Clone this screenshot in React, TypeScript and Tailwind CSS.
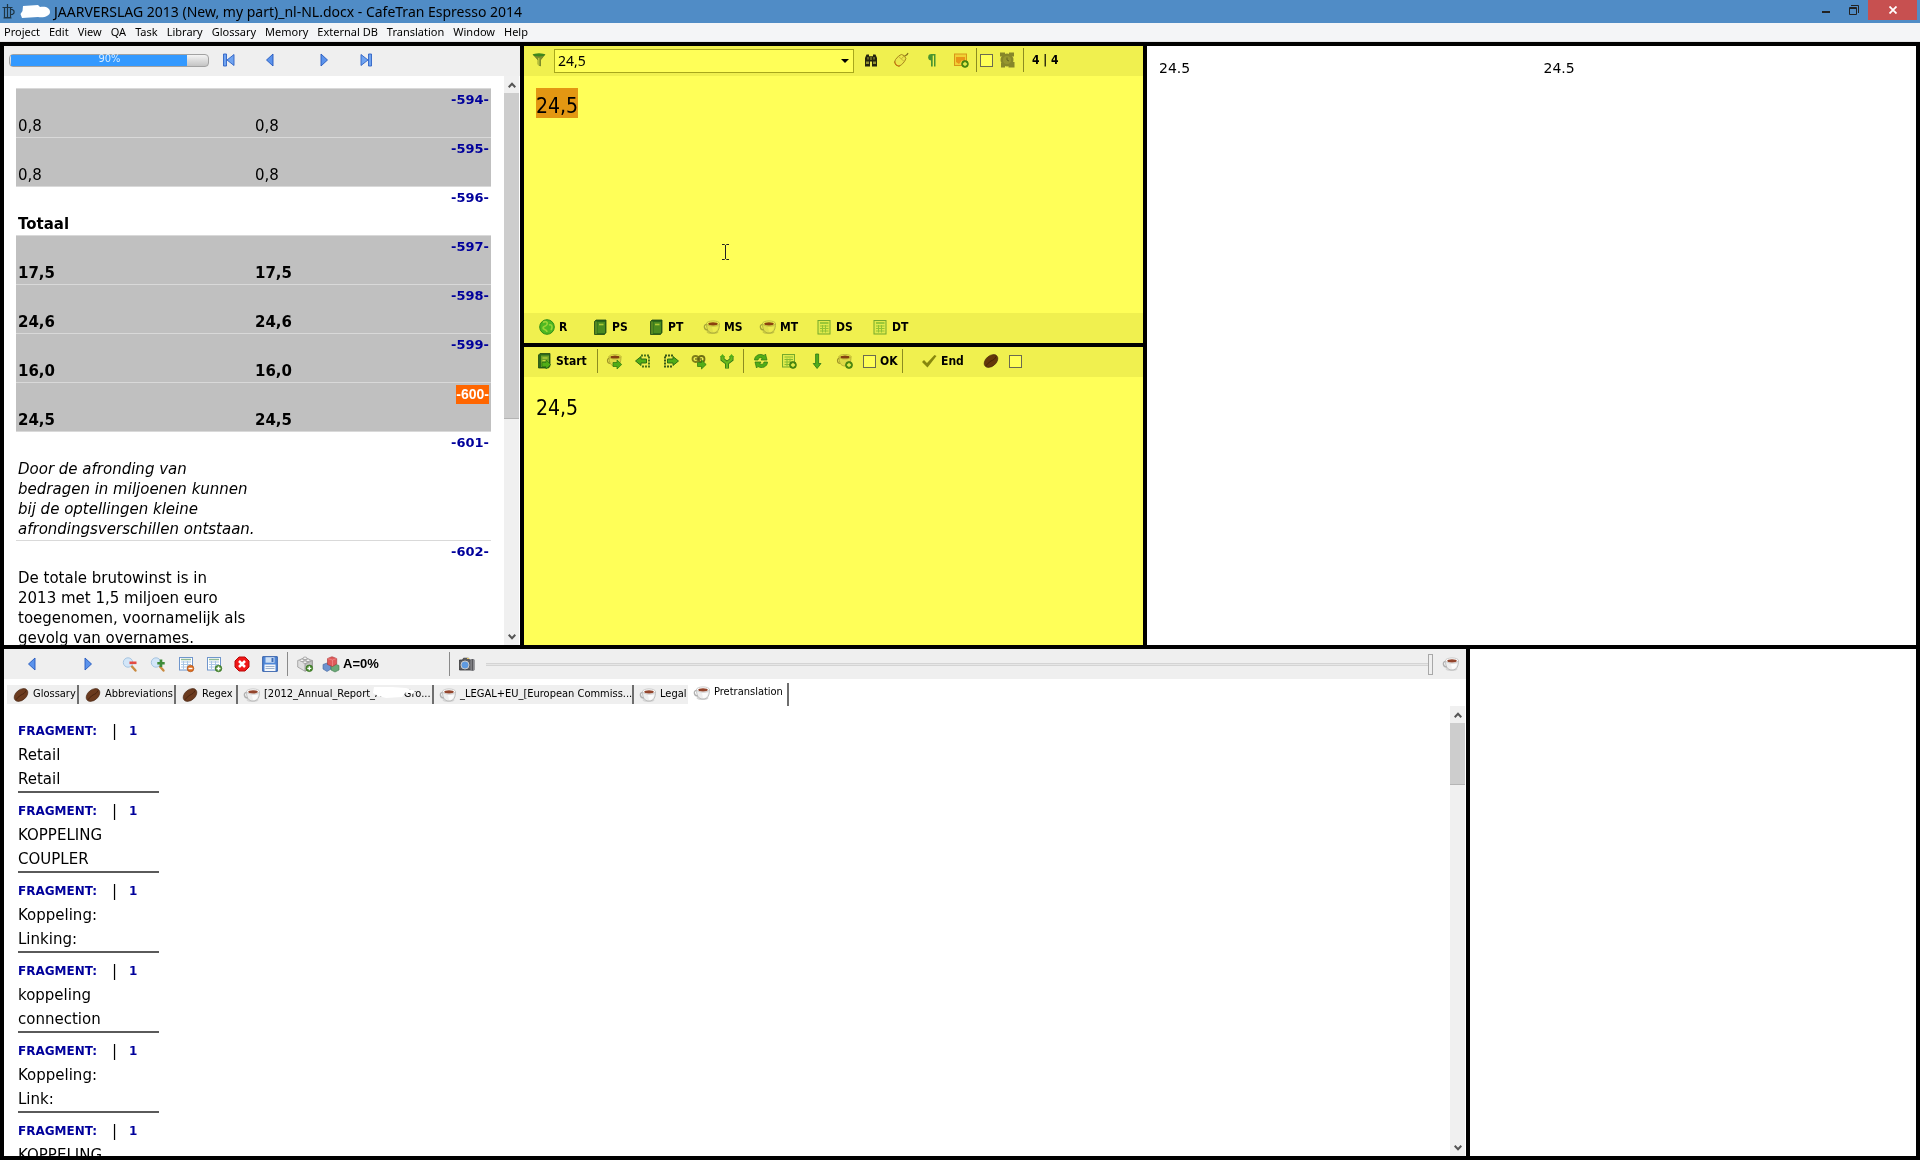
import React from 'react';

type IconName = keyof typeof drawings;

// colour drawings on a 16x16 grid
const drawings = {
  first: (
    <g stroke="#2f62c4" strokeWidth=".9" fill="#6fa3f0">
      <path d="M2.5 2h3v12h-3zM13 2.5v11L6 8z" />
    </g>
  ),
  prev: <path d="M11 2v12L4.5 8z" fill="#5b93ec" stroke="#2458bd" strokeWidth=".9" />,
  next: <path d="M5 2v12l6.5-6z" fill="#5b93ec" stroke="#2458bd" strokeWidth=".9" />,
  last: (
    <g stroke="#2f62c4" strokeWidth=".9" fill="#6fa3f0">
      <path d="M10.5 2h3v12h-3zM3 2.5v11L10 8z" />
    </g>
  ),
  filter: (
    <g>
      <path d="M2 2.5h12L9.5 8v6L7 12.5V8z" fill="#87988a" stroke="#5e7060" strokeWidth=".6" />
      <ellipse cx="8" cy="2.8" rx="6" ry="1.6" fill="#3f8f58" />
      <path d="M7.8 6v7" stroke="#dfe6dc" />
    </g>
  ),
  binoculars: (
    <g fill="#26262a">
      <path d="M3.5 2.5H6v1.8h4V2.500h2.500L14 6v8.500H9V9.500H7v5H2V6z" />
      <path d="M3 9.500h3V12H3zM10 9.500h3V12h-3z" fill="#9a9aa2" />
      <path d="M4 5h2v2.500H4zM7 5h2v3H7zM10 5h2v2.500h-2z" fill="#6a6a72" />
    </g>
  ),
  mouse: (
    <g>
      <path d="M11 5c1-2 3-1 4-4" fill="none" stroke="#8e7a50" strokeWidth="1.200" />
      <g transform="rotate(42 8 8)">
        <rect x="3.600" y="2.600" width="8" height="12.500" rx="4" fill="#faf6ee" stroke="#b08a58" strokeWidth=".9" />
        <path d="M7.600 2.800v4M3.800 7h7.600" stroke="#c9ae84" strokeWidth=".7" />
        <path d="M4.500 13c1.500 2.500 5 2.500 6.500 0" stroke="#d9761e" fill="none" />
      </g>
    </g>
  ),
  pilcrow: (
    <g>
      <path d="M8 2h4.500v12.500H11v-11H9.700v11H8z" fill="#4e9e96" />
      <path d="M8.500 2A3.300 3.300 0 0 0 8.500 8.600z" fill="#4e9e96" />
    </g>
  ),
  note: (
    <g>
      <rect x="1.500" y="2" width="12" height="11.500" fill="#ffe0a8" stroke="#e7a048" />
      <path d="M3 5h9v6l-3-3-3 4-3-2z" fill="#f7a04a" />
      <circle cx="12" cy="12" r="3.400" fill="#5a9c34" stroke="#2d6a16" strokeWidth=".6" />
      <path d="M12 10v4M10 12h4" stroke="#fff" strokeWidth="1.300" />
    </g>
  ),
  alarm: (
    <g fill="#8f8f87">
      <circle cx="8" cy="8" r="6.500" />
      <path d="M1 .5h5v4H1zM10 .5h5v4h-5zM2 11h4v4.500H2zM9.500 10H15.500v5.500h-6z" />
      <circle cx="8" cy="8" r="4" fill="#a0a097" />
      <path d="M8 5.500V8l2 1" stroke="#6c6c64" fill="none" />
    </g>
  ),
  globe: (
    <g>
      <circle cx="8" cy="8" r="7.300" fill="#54c46c" stroke="#2f9548" />
      <path d="M4 3.500c3-2 5 0 4 2S4 7 4 9s4 1 4 4M10 6c3-1 4 2 2 5" fill="none" stroke="#a4e2ac" strokeWidth="1.600" />
    </g>
  ),
  book: (
    <g>
      <path d="M4 1h10v12.500L12.500 15.500H2.500V2.500z" fill="#2e7050" stroke="#1f4d36" strokeWidth=".8" />
      <path d="M5.500 3H13v11H5.500z" fill="#4f9464" />
      <path d="M7 5.500h4.500" stroke="#b8d6a8" strokeWidth="1.600" />
      <path d="M4 2.500v12.500" stroke="#9dc0a0" strokeWidth=".8" />
    </g>
  ),
  bookGo: (
    <g>
      <path d="M4 .5h10V13l-1.500 2H2.500V2z" fill="#2e7050" stroke="#1f4d36" strokeWidth=".8" />
      <path d="M5 2.500h8v11.500H5z" fill="#74ac7c" />
      <path d="M6.500 5h5M6.500 7.500h4" stroke="#d6e8c8" strokeWidth="1.200" />
      <path d="M6 9.500h4V7l4.500 4.500L10 16v-2.500H6z" fill="#56b84a" stroke="#2c7d27" strokeWidth=".7" />
    </g>
  ),
  cup: (
    <g>
      <ellipse cx="8.500" cy="13" rx="6" ry="2" fill="#d6d6d6" />
      <path d="M3 5.500C-.8 5-.6 11 4 11" fill="none" stroke="#b0b0b0" strokeWidth="1.300" />
      <path d="M2.500 4.500h13c0 5.500-1.500 9.500-6.500 9.500S2.500 10 2.500 4.500z" fill="#eeeeee" stroke="#b2b2b2" strokeWidth=".8" />
      <path d="M8 8h6c-.6 3.500-2 5-5 5z" fill="#fbfbfb" />
      <ellipse cx="9" cy="4.500" rx="6.500" ry="2.600" fill="#fdfdfd" stroke="#bcbcbc" strokeWidth=".7" />
      <ellipse cx="9" cy="4.800" rx="4.800" ry="1.600" fill="#93452c" />
    </g>
  ),
  cupGo: (
    <g>
      <path d="M3 5C-.5 5-.3 10.500 3.500 10.500" fill="none" stroke="#a89c7c" strokeWidth="1.200" />
      <path d="M2 3.500h12c0 6-1.500 9.500-6 9.500S2 9.500 2 3.500z" fill="#ece8dc" stroke="#b0a587" strokeWidth=".7" />
      <ellipse cx="8" cy="3.700" rx="6" ry="2.300" fill="#fffdf4" stroke="#b0a587" strokeWidth=".6" />
      <ellipse cx="8" cy="4" rx="4.600" ry="1.500" fill="#8c4430" />
      <path d="M6 9.500h4V7l4.700 4.500L10 16v-2.500H6z" fill="#56b84a" stroke="#2c7d27" strokeWidth=".7" />
    </g>
  ),
  cupAdd: (
    <g>
      <path d="M3 5C-.5 5-.3 10.500 3.500 10.500" fill="none" stroke="#a89c7c" strokeWidth="1.200" />
      <path d="M2 3.500h12c0 6-1.500 9.500-6 9.500S2 9.500 2 3.500z" fill="#ece8dc" stroke="#b0a587" strokeWidth=".7" />
      <ellipse cx="8" cy="3.700" rx="6" ry="2.300" fill="#fffdf4" stroke="#b0a587" strokeWidth=".6" />
      <ellipse cx="8" cy="4" rx="4.600" ry="1.500" fill="#8c4430" />
      <circle cx="12" cy="12" r="3.500" fill="#5a9c34" stroke="#2d6a16" strokeWidth=".6" />
      <path d="M12 10v4M10 12h4" stroke="#fff" strokeWidth="1.300" />
    </g>
  ),
  sheet: (
    <g>
      <rect x="2" y="1.500" width="12" height="13.500" fill="#eefaf0" stroke="#7cb48c" />
      <path d="M4 4h8.500" stroke="#8cc89a" strokeWidth="1.500" />
      <path d="M4 7h8.500M4 9.500h8.500M4 12h8.500M6.500 6v7.500M9.500 6v7.500" stroke="#9ccfa4" />
    </g>
  ),
  sheetAdd: (
    <g>
      <rect x="1.500" y="1.500" width="12" height="12.500" fill="#eefaf0" stroke="#7cb48c" />
      <path d="M3.500 4h8.500M3.500 6.500h8.500M3.500 9h8.500M3.500 11.500h8.500M6 5.500v8M9 5.500v8" stroke="#90c898" />
      <circle cx="12" cy="12" r="3.400" fill="#5a9c34" stroke="#2d6a16" strokeWidth=".6" />
      <path d="M12 10v4M10 12h4" stroke="#fff" strokeWidth="1.300" />
    </g>
  ),
  sendBack: (
    <g>
      <path d="M6 2.500h8v11H6" fill="none" stroke="#4d7a50" strokeWidth="2" strokeDasharray="2 1" />
      <path d="M.5 8L6 3.500V6h5.500v4H6v2.500z" fill="#56b84a" stroke="#246b3a" strokeWidth=".9" />
    </g>
  ),
  sendOn: (
    <g>
      <path d="M10 2.500H2v11h8" fill="none" stroke="#3d5f50" strokeWidth="2" strokeDasharray="2 1" />
      <path d="M15.500 8L10 3.500V6H4.500v4H10v2.500z" fill="#56b84a" stroke="#246b3a" strokeWidth=".9" />
    </g>
  ),
  chainGo: (
    <g>
      <circle cx="4.500" cy="6" r="3" fill="none" stroke="#86864e" strokeWidth="1.800" />
      <circle cx="10.500" cy="6" r="3" fill="none" stroke="#75753e" strokeWidth="1.800" />
      <path d="M4 6h7" stroke="#5c5c34" strokeWidth="1.200" />
      <path d="M6.500 9.500h4V7l4.700 4.500-4.700 4.500v-2.500h-4z" fill="#56b84a" stroke="#2c7d27" strokeWidth=".7" />
    </g>
  ),
  merge: (
    <g fill="none">
      <path d="M3.500 3v3.500L8 10v5.500M12.500 3v3.500L8 10" stroke="#2c7d3a" strokeWidth="4" />
      <path d="M3.500 3v3.500L8 10v5M12.500 3v3.500L8 10" stroke="#6fc45c" strokeWidth="2.400" />
      <path d="M1 4l2.500-3L6 4zM10 4l2.500-3L15 4z" fill="#56b84a" />
    </g>
  ),
  refresh: (
    <g fill="#56b84a" stroke="#2c7d3a" strokeWidth=".7">
      <path d="M1.500 7c0-5 6-7 9.500-4.500L12.500 1 14 7H8l1.200-1.800C7 4 5.500 5 5 7z" />
      <path d="M14.500 9c0 5-6 7-9.500 4.500L3.500 15 2 9h6l-1.200 1.800c2.200 1.200 3.700.2 4.200-1.800z" />
    </g>
  ),
  down: <path d="M6.600 1h3v9.500H12l-3.900 5L4.200 10.500h2.400z" fill="#56b858" stroke="#2c7d4a" strokeWidth=".8" />,
  check: <path d="M1 9l2-2 3 3 7.500-8L15.500 3 6.500 14.500z" fill="#8f8f28" />,
  bean: (
    <g>
      <ellipse cx="8" cy="8" rx="7.800" ry="5.200" transform="rotate(-40 8 8)" fill="#6b3a1e" stroke="#43220f" strokeWidth=".6" />
      <path d="M3 12.500c2-1 2.500-3.500 5-4.500s4-2 5-4.500" fill="none" stroke="#4a2510" strokeWidth="1" />
    </g>
  ),
  zoomOut: (
    <g>
      <path d="M9.500 10l4 4.500" stroke="#c98a3f" strokeWidth="2.400" strokeLinecap="round" />
      <circle cx="6" cy="6.500" r="4.700" fill="#d3e6f8" stroke="#a6c4e0" />
      <path d="M7.500 5.500h7v2.600h-7z" fill="#e34a42" />
    </g>
  ),
  zoomIn: (
    <g>
      <path d="M9.500 10l4 4.500" stroke="#c98a3f" strokeWidth="2.400" strokeLinecap="round" />
      <circle cx="6" cy="6.500" r="4.700" fill="#d3e6f8" stroke="#a6c4e0" />
      <path d="M9.700 3.500h2.600v2.400h2.400v2.600h-2.400v2.400H9.700V8.500H7.300V5.900h2.400z" fill="#3f8c3a" />
    </g>
  ),
  tableRemove: (
    <g>
      <rect x="1.500" y="1.500" width="13" height="12.500" fill="#fff" stroke="#6f96cc" />
      <path d="M3 3.500h10" stroke="#8fbb98" strokeWidth="1.500" />
      <path d="M3 6h10M3 8.500h10M3 11h10M5.500 5v8M9.500 5v8" stroke="#a9c6e4" />
      <circle cx="12.500" cy="12.500" r="3.300" fill="#dd6d20" stroke="#a8480c" strokeWidth=".6" />
      <path d="M10.500 12.500h4" stroke="#fff" strokeWidth="1.500" />
    </g>
  ),
  tableAdd: (
    <g>
      <rect x="1.500" y="1.500" width="13" height="12.500" fill="#fff" stroke="#6f96cc" />
      <path d="M3 3.500h10" stroke="#8fbb98" strokeWidth="1.500" />
      <path d="M3 6h10M3 8.500h10M3 11h10M5.500 5v8M9.500 5v8" stroke="#a9c6e4" />
      <circle cx="12.500" cy="12.500" r="3.300" fill="#4e8f34" stroke="#2d6a16" strokeWidth=".6" />
      <path d="M12.500 10.500v4M10.500 12.500h4" stroke="#fff" strokeWidth="1.500" />
    </g>
  ),
  stop: (
    <g>
      <path d="M5 1h6l4 4v6l-4 4H5l-4-4V5z" fill="#f01818" stroke="#b80808" />
      <path d="M5 5l6 6M11 5l-6 6" stroke="#fff" strokeWidth="2.500" />
    </g>
  ),
  save: (
    <g>
      <path d="M.7.7h14.600v14.600H.7z" fill="#5088d8" stroke="#2f5ca8" />
      <path d="M3.500 1.200h9v5.500h-9z" fill="#cfe0f4" />
      <path d="M2.500 8.500h11v6.500h-11z" fill="#f4f7fb" />
      <path d="M3.500 10.500h9M3.500 12.500h9" stroke="#9bb0cc" />
      <path d="M9.500 2h2v4h-2z" fill="#3f6db8" />
    </g>
  ),
  brick: (
    <g stroke="#8e8e8e" strokeWidth=".7">
      <path d="M.7 4.500L8 2l7.300 2.500v6.500L8 15.200.7 11z" fill="#dedede" />
      <path d="M8 8v7.200l7.300-4.200V4.500z" fill="#c2c2c2" />
      <ellipse cx="5" cy="4.300" rx="2" ry="1.300" fill="#f4f4f4" />
      <ellipse cx="11" cy="4.300" rx="2" ry="1.300" fill="#f4f4f4" />
      <ellipse cx="8" cy="2.300" rx="2" ry="1.300" fill="#f4f4f4" />
      <ellipse cx="8" cy="6.200" rx="2" ry="1.300" fill="#f4f4f4" />
      <circle cx="12.300" cy="12.300" r="3.300" fill="#4e8f34" stroke="#2d6a16" />
      <path d="M12.300 10.300v4M10.300 12.300h4" stroke="#fff" strokeWidth="1.300" />
    </g>
  ),
  cubes: (
    <g strokeWidth=".6">
      <path d="M0 8.500L4 7l4 1.500v4.500L4 15.500 0 13z" fill="#6d93cf" stroke="#42669e" />
      <path d="M8 9.500L12 8l4 1.500v4.500L12 16l-4-2z" fill="#6aa877" stroke="#3f7a4c" />
      <path d="M4.500 2.500L9 .7l4.700 1.800v5.500L9.500 10.500l-5-2z" fill="#e05a5a" stroke="#a83434" />
      <path d="M4.500 2.500l5 1.500 4-1.500M9.500 4v6" fill="none" stroke="#f49a9a" />
    </g>
  ),
  camera: (
    <g>
      <path d="M.5 4h3l1-1.800h5L10.500 4H15v10H.5z" fill="#5c5c60" stroke="#38383a" strokeWidth=".8" />
      <path d="M11.500 3h3.800v11.500h-3.800z" fill="#8b8b90" />
      <path d="M13.300 3v11.500" stroke="#4a4a4e" />
      <circle cx="6" cy="9" r="4" fill="#5f9ae0" stroke="#c9c9c9" />
      <path d="M8 2.500h2" stroke="#e8c860" />
    </g>
  ),
};

function Icon({ name, className = '' }: { name: IconName; className?: string }) {
  return (
    <svg viewBox="0 0 16 16" className={`size-4 shrink-0 overflow-visible ${className}`} aria-hidden="true">
      {drawings[name]}
    </svg>
  );
}

function Tool({ icon, label, tinted, className = 'w-7' }: { icon: IconName; label: string; tinted?: boolean; className?: string }) {
  return (
    <button aria-label={label} className={`flex h-6 shrink-0 items-center justify-center ${className}`}>
      <Icon name={icon} className={tinted ? 'mix-blend-multiply' : ''} />
    </button>
  );
}

function TextTool({ icon, text, className = '' }: { icon: IconName; text: string; className?: string }) {
  return (
    <button className={`flex shrink-0 items-center gap-1 ${className}`}>
      <Icon name={icon} className="mix-blend-multiply" />
      {text}
    </button>
  );
}

const Divider = ({ className = 'bg-[#8c8c20]' }: { className?: string }) => (
  <span className={`h-6 w-px shrink-0 ${className}`} />
);

const Check = ({ label, className = '' }: { label: string; className?: string }) => (
  <input
    type="checkbox"
    aria-label={label}
    className={`size-[13px] shrink-0 appearance-none border border-[#6b6b50] bg-[#ffff58] ${className}`}
  />
);

function Chevron({ up }: { up?: boolean }) {
  return (
    <svg viewBox="0 0 8 6" className="h-1.5 w-2" fill="none" stroke="#555" strokeWidth="2">
      <path d={up ? 'M.7 5.200L4 1.800l3.300 3.400' : 'M.7.8L4 4.200 7.300.8'} />
    </svg>
  );
}

function ScrollBar({ thumb }: { thumb: string }) {
  return (
    <div className="mr-px flex w-[15px] shrink-0 flex-col bg-[#f0f0f0]">
      <button aria-label="Scroll up" className="flex h-[17px] shrink-0 items-center justify-center">
        <Chevron up />
      </button>
      <div className="min-h-0 flex-1">
        <div className={`border-b border-[#b4b4b4] bg-[#cdcdcd] ${thumb}`} />
      </div>
      <button aria-label="Scroll down" className="flex h-[17px] shrink-0 items-center justify-center">
        <Chevron />
      </button>
    </div>
  );
}

const menus = [
  'Project', 'Edit', 'View', 'QA', 'Task', 'Library', 'Glossary',
  'Memory', 'External DB', 'Translation', 'Window', 'Help',
];

interface Segment {
  id: number;
  source: string;
  target?: string;
  style?: string;
  shaded?: boolean;
  current?: boolean;
}

const segments: Segment[] = [
  { id: 594, source: '0,8', target: '0,8', shaded: true },
  { id: 595, source: '0,8', target: '0,8', shaded: true },
  { id: 596, source: 'Totaal', style: 'font-bold' },
  { id: 597, source: '17,5', target: '17,5', style: 'font-bold', shaded: true },
  { id: 598, source: '24,6', target: '24,6', style: 'font-bold', shaded: true },
  { id: 599, source: '16,0', target: '16,0', style: 'font-bold', shaded: true },
  { id: 600, source: '24,5', target: '24,5', style: 'font-bold', shaded: true, current: true },
  {
    id: 601,
    source: 'Door de afronding van\nbedragen in miljoenen kunnen\nbij de optellingen kleine\nafrondingsverschillen ontstaan.',
    style: 'italic',
  },
  {
    id: 602,
    source: 'De totale brutowinst is in\n2013 met 1,5 miljoen euro\ntoegenomen, voornamelijk als\ngevolg van overnames.',
  },
];

const fragments = [
  ['Retail', 'Retail'],
  ['KOPPELING', 'COUPLER'],
  ['Koppeling:', 'Linking:'],
  ['koppeling', 'connection'],
  ['Koppeling:', 'Link:'],
  ['KOPPELING', 'LINK'],
];

function TitleBar() {
  return (
    <header className="flex h-[23px] shrink-0 items-start bg-[#508cc6]">
      <svg viewBox="0 0 14 16" className="mt-1 ml-0.5 h-4 w-3.5" fill="none" stroke="#1d3444" strokeWidth="1.200">
        <path d="M2.500 3.500v10h6v-10M.5 3.500h10M1.500 14h8M5.500 0v14M8.500 5.500h2l1.500 1.500v2l-1.500 1.500h-2" />
      </svg>
      <svg viewBox="0 0 32 16" className="mt-1 ml-1 h-4 w-8" fill="#fff">
        <path d="M3 2l15-1 2 2c6-1 10 1 10 5s-6 6-12 5L2 14 .5 10l2-3z" />
      </svg>
      <h1 className="mt-px ml-0.5 text-[14px] leading-[22px] whitespace-nowrap">
        JAARVERSLAG 2013 (New, my part)_nl-NL.docx - CafeTran Espresso 2014
      </h1>
      <div className="mr-[3px] ml-auto flex h-5">
        <button aria-label="Minimize" className="flex w-7 items-center justify-center">
          <span className="mt-1 h-0.5 w-2 bg-[#222]" />
        </button>
        <button aria-label="Restore" className="flex w-7 items-center justify-center">
          <svg viewBox="0 0 10 10" className="size-2.5" fill="none" stroke="#222">
            <path d="M.5 2.500h7v7h-7zM.5 3.500h7M2 .5h7.500V8" />
          </svg>
        </button>
        <button aria-label="Close" className="flex w-[49px] items-center justify-center bg-[#c75050]">
          <svg viewBox="0 0 8 8" className="size-2" stroke="#fff" strokeWidth="1.800">
            <path d="M.5.5l7 7M7.500.5l-7 7" />
          </svg>
        </button>
      </div>
    </header>
  );
}

function DocumentPane() {
  return (
    <section className="flex w-[516px] shrink-0 flex-col bg-white">
      <div className="flex h-[30px] shrink-0 items-center bg-[#efefef] pb-0.5">
        <div className="ml-[5px] flex h-[13px] w-[200px] rounded-sm border border-[#a2a2a2] bg-linear-to-b from-[#f4f4f4] to-[#c4c4c4] px-px">
          <div className="flex w-[90%] items-center justify-end bg-[#3399ff] pr-[67px] pb-0.5 font-['DejaVu_Sans_Condensed','DejaVu_Sans',sans-serif] text-[11px] text-[#d8ecff]">
            90%
          </div>
        </div>
        <Tool icon="first" label="First segment" className="w-10" />
        <Tool icon="prev" label="Previous segment" className="w-[42px]" />
        <Tool icon="next" label="Next segment" className="ml-3 w-[42px]" />
        <Tool icon="last" label="Last segment" className="w-[42px]" />
      </div>
      <div className="flex min-h-0 flex-1">
        <div className="min-w-0 flex-1 overflow-hidden pt-3 pr-[13px] pl-3">
          <table className="w-full table-fixed border-collapse font-['DejaVu_Sans',sans-serif] text-[15px] leading-5">
            <colgroup>
              <col className="w-[237px]" />
              <col />
              <col className="w-[60px]" />
            </colgroup>
            <tbody>
              {segments.map((s) => (
                <tr key={s.id} className={`border-t border-[#d9d9d9] ${s.shaded ? 'bg-[#c0c0c0]' : ''}`}>
                  <td className={`px-0.5 pt-[27px] pb-px align-bottom whitespace-pre ${s.style ?? ''}`}>{s.source}</td>
                  <td className={`px-0.5 pt-[27px] pb-px align-bottom ${s.style ?? ''}`}>{s.target}</td>
                  <td className="pt-px pr-0.5 text-right align-top text-[13px] font-bold text-[#00009b]">
                    {s.current ? (
                      <span className="mt-px inline-block bg-[#ff6600] font-['Liberation_Sans',sans-serif] text-[14px] leading-[19px] text-white">
                        -{s.id}-
                      </span>
                    ) : (
                      `-${s.id}-`
                    )}
                  </td>
                </tr>
              ))}
            </tbody>
          </table>
        </div>
        <ScrollBar thumb="h-[61%]" />
      </div>
    </section>
  );
}

function SourcePane() {
  return (
    <section className="flex h-[297px] shrink-0 flex-col bg-[#ffff58]">
      <div className="flex h-[30px] shrink-0 items-center bg-[#f0f04f] pb-0.5">
        <Tool icon="filter" label="Filter" tinted className="ml-px w-7" />
        <div className="relative ml-px w-[300px] shrink-0">
          <select
            aria-label="Search term"
            className="h-6 w-full appearance-none border border-[#a8a81c] bg-[#ffff58] pl-[3px] text-[14px] leading-5"
          >
            <option>24,5</option>
          </select>
          <svg viewBox="0 0 8 4" className="pointer-events-none absolute top-[11px] right-[5px] h-1 w-2">
            <path d="M0 0h8L4 4z" />
          </svg>
        </div>
        <Tool icon="binoculars" label="Find" tinted className="ml-0.5 w-[30px]" />
        <Tool icon="mouse" label="Select" tinted className="w-[30px]" />
        <Tool icon="pilcrow" label="Show formatting" tinted className="w-[30px]" />
        <Tool icon="note" label="Add note" tinted className="w-[30px]" />
        <Divider />
        <Check label="Reminder" className="ml-[3px]" />
        <Tool icon="alarm" label="Alarm" tinted />
        <Divider className="ml-0.5 bg-[#8c8c20]" />
        <span className="ml-2 font-['DejaVu_Sans_Condensed','DejaVu_Sans',sans-serif] text-[12px] font-bold">4 | 4</span>
      </div>
      <div className="relative flex-1 px-3 pt-3">
        <span className="inline-block bg-[#e39712] pt-1.5 font-['DejaVu_Sans_Condensed','DejaVu_Sans',sans-serif] text-[21px] leading-6">24,5</span>
        <svg viewBox="0 0 7 16" className="absolute top-[168px] left-[198px] h-4 w-[7px]" fill="none" stroke="#222">
          <path d="M0 .5h2.500l1 1 1-1H7M0 15.500h2.500l1-1 1 1H7M3.500 1v14" />
        </svg>
      </div>
      <div className="flex h-[30px] shrink-0 items-center bg-[#f0f04f] pb-0.5 pl-[15px] font-['DejaVu_Sans_Condensed','DejaVu_Sans',sans-serif] text-[12px] font-bold">
        <TextTool icon="globe" text="R" className="w-[53px]" />
        <TextTool icon="book" text="PS" className="w-14" />
        <TextTool icon="book" text="PT" className="w-14" />
        <TextTool icon="cup" text="MS" className="w-14" />
        <TextTool icon="cup" text="MT" className="w-14" />
        <TextTool icon="sheet" text="DS" className="w-14" />
        <TextTool icon="sheet" text="DT" className="w-14" />
      </div>
    </section>
  );
}

function TargetPane() {
  return (
    <section className="flex min-h-0 flex-1 flex-col bg-[#ffff58]">
      <div className="flex h-[30px] shrink-0 items-center bg-[#f0f04f] pb-0.5 pl-3 font-['DejaVu_Sans_Condensed','DejaVu_Sans',sans-serif] text-[12px] font-bold">
        <TextTool icon="bookGo" text="Start" className="w-[61px]" />
        <Divider />
        <Tool icon="cupGo" label="Insert from memory" tinted className="ml-[3px] w-7" />
        <Tool icon="sendBack" label="Move left" tinted />
        <Tool icon="sendOn" label="Move right" tinted />
        <Tool icon="chainGo" label="Join" tinted />
        <Tool icon="merge" label="Merge" tinted />
        <Divider className="ml-0.5 bg-[#8c8c20]" />
        <Tool icon="refresh" label="Refresh" tinted className="ml-[3px] w-7" />
        <Tool icon="sheetAdd" label="Add to glossary" tinted />
        <Tool icon="down" label="Transfer" tinted />
        <Tool icon="cupAdd" label="Add to memory" tinted />
        <label className="ml-1 flex w-[39px] items-center gap-1">
          <Check label="OK" />
          OK
        </label>
        <Divider />
        <TextTool icon="check" text="End" className="ml-[18px] w-14" />
        <Tool icon="bean" label="Term" tinted />
        <Check label="Automatic" className="ml-1" />
      </div>
      <div className="px-3 pt-4 font-['DejaVu_Sans_Condensed','DejaVu_Sans',sans-serif] text-[21px] leading-[30px]">24,5</div>
    </section>
  );
}

const tabs: { icon: IconName; text: string; width: string }[] = [
  { icon: 'bean', text: 'Glossary', width: 'w-[72px]' },
  { icon: 'bean', text: 'Abbreviations', width: 'w-[97px]' },
  { icon: 'bean', text: 'Regex', width: 'w-[62px]' },
  { icon: 'cup', text: '[2012_Annual_Report_A       Gro...', width: 'w-[196px]' },
  { icon: 'cup', text: '_LEGAL+EU_[European Commiss...', width: 'w-[200px]' },
  { icon: 'cup', text: 'Legal', width: 'w-[54px]' },
];

function MatchPane() {
  return (
    <section className="flex min-w-0 flex-[1462] flex-col bg-white">
      <div className="flex h-[30px] shrink-0 items-center bg-[#efefef]">
        <Tool icon="prev" label="Previous" className="w-14" />
        <Tool icon="next" label="Next" className="w-14" />
        <Tool icon="zoomOut" label="Zoom out" />
        <Tool icon="zoomIn" label="Zoom in" />
        <Tool icon="tableRemove" label="Remove entry" />
        <Tool icon="tableAdd" label="Add entry" />
        <Tool icon="stop" label="Stop" />
        <Tool icon="save" label="Save" />
        <Divider className="ml-[3px] bg-[#8a8a8a]" />
        <Tool icon="brick" label="Add fragment" className="ml-[3px] w-7" />
        <Tool icon="cubes" label="Auto-assemble" className="w-6" />
        <span className="w-[106px] font-['Liberation_Sans',sans-serif] text-[13px] font-bold">A=0%</span>
        <Divider className="bg-[#8a8a8a]" />
        <Tool icon="camera" label="Snapshot" className="ml-[3px] w-7" />
        <input
          type="range"
          aria-label="Match threshold"
          defaultValue={100}
          className="ml-[5px] h-[22px] min-w-0 flex-1 appearance-none bg-transparent [&::-webkit-slider-runnable-track]:h-[3px] [&::-webkit-slider-runnable-track]:border-y [&::-webkit-slider-runnable-track]:border-[#d4d4d4] [&::-webkit-slider-runnable-track]:bg-[#e6e6e6] [&::-webkit-slider-thumb]:mt-[-10px] [&::-webkit-slider-thumb]:h-[21px] [&::-webkit-slider-thumb]:w-[5px] [&::-webkit-slider-thumb]:appearance-none [&::-webkit-slider-thumb]:border [&::-webkit-slider-thumb]:border-[#a8a8a8] [&::-webkit-slider-thumb]:bg-[#efefef]"
        />
        <Tool icon="cup" label="Memory" className="mr-px ml-1 w-7" />
      </div>
      <div className="flex h-[27px] shrink-0 items-start pl-[3px] font-['DejaVu_Sans_Condensed','DejaVu_Sans',sans-serif] text-[11px]" role="tablist">
        {tabs.map((t) => (
          <button
            key={t.text}
            role="tab"
            className={`mt-1.5 flex h-[19px] shrink-0 items-center gap-1 border-[#6e6e6e] bg-[#efefef] pl-1.5 whitespace-pre ${
              t.text === 'Legal' ? '' : 'border-r-2'
            } ${t.width}`}
          >
            <Icon name={t.icon} />
            {t.text.startsWith('[2012') ? (
              <span className="relative">
                {t.text}
                {/* painted-over client name */}
                <svg viewBox="0 0 44 14" className="absolute top-0 right-[15px] h-3.5 w-11" fill="#fff">
                  <path d="M2 1h18l14 1 9 3-2 3-7-2-4 5-16 1L6 10 1 7z" />
                </svg>
              </span>
            ) : (
              t.text
            )}
          </button>
        ))}
        <button role="tab" aria-selected="true" className="mt-1 flex h-[23px] w-[101px] items-center gap-1 border-r-2 border-[#6e6e6e] pb-1 pl-1.5">
          <Icon name="cup" />
          Pretranslation
        </button>
      </div>
      <div className="flex min-h-0 flex-1">
        <div className="min-w-0 flex-1 overflow-hidden pt-[13px] pl-[14px] font-['DejaVu_Sans',sans-serif] text-[15px] leading-6">
          {fragments.map(([source, target], i) => (
            <article key={i} className="mb-1.5 w-[141px] border-b-2 border-[#5a5a5a]">
              <h2 className="flex text-[12px] font-bold whitespace-nowrap text-[#00009b]">
                <span className="w-[94px]">FRAGMENT:</span>
                <span className="w-[17px] text-[15px] font-normal text-black">|</span>
                <span>1</span>
              </h2>
              <p>{source}</p>
              <p>{target}</p>
            </article>
          ))}
        </div>
        <ScrollBar thumb="h-[62px]" />
      </div>
    </section>
  );
}

export default function App() {
  return (
    <div className="flex h-screen flex-col overflow-hidden bg-black font-['Noto_Sans','Open_Sans',sans-serif] text-black">
      <TitleBar />
      <nav className="flex h-[19px] shrink-0 items-center gap-[9px] border-b border-[#e4e4e6] bg-[#f4f5f7] pt-px pl-1 text-[11px]">
        {menus.map((m) => (
          <button key={m} className="whitespace-nowrap">
            {m}
          </button>
        ))}
      </nav>
      <main className="flex min-h-0 flex-1 flex-col gap-1 p-1">
        <div className="flex min-h-0 flex-[599] gap-1">
          <DocumentPane />
          <div className="flex min-w-0 flex-[619] flex-col gap-1">
            <SourcePane />
            <TargetPane />
          </div>
          <section className="flex min-w-0 flex-[769] bg-white pt-3 font-['DejaVu_Sans',sans-serif] text-[14px] leading-5">
            <p className="flex-1 pl-3">24.5</p>
            <p className="flex-1 pl-3">24.5</p>
          </section>
        </div>
        <div className="flex min-h-0 flex-[507] gap-1">
          <MatchPane />
          <section className="min-w-0 flex-[446] bg-white" />
        </div>
      </main>
    </div>
  );
}
